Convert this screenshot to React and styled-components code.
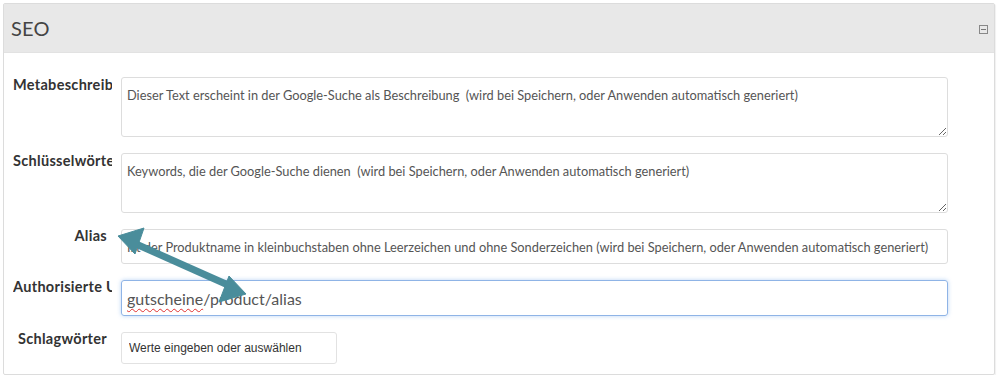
import React from "react"
import styled, { createGlobalStyle } from "styled-components"

const GlobalStyle = createGlobalStyle`
    body {
        margin: 0;
        background: #fff;
        font-family: Lato, "Open Sans", sans-serif;
    }
`

const Panel = styled.div`
    margin: 3px 5px 0 3px;
    border: 1px solid #dcdcdc;
    border-radius: 2px;
    height: 372px;
    box-sizing: border-box;
    box-shadow: 1px 1px 1px rgba(0,0,0,.06);
`

const Header = styled.div`
    display: flex;
    align-items: center;
    justify-content: space-between;
    height: 48px;
    padding: 0 6px 0 7px;
    background: #e8e8e8;
    border-bottom: 1px solid #e2e2e2;
`

const Title = styled.h3`
    margin: 0;
    font-size: 20px;
    font-weight: 400;
    color: #444;
    letter-spacing: .2px;
`

const CollapseIcon = styled.span`
    display: inline-block;
    width: 7px;
    height: 7px;
    border: 1px solid #888;
    position: relative;
    margin-top: 2px;
    &::after {
        content: "";
        position: absolute;
        left: 1px;
        right: 1px;
        top: 3px;
        height: 1px;
        background: #777;
    }
`

const Body = styled.div`
    position: relative;
    padding: 24px 0 0 9px;
    display: flex;
    flex-direction: column;
    gap: 16px;
`

const Row = styled.div`
    display: flex;
    align-items: flex-start;
    gap: 9px;
`

const Label = styled.label`
    width: 94px;
    padding-right: 5px;
    margin-top: ${p => (p.top || 0) - 2}px;
    flex: none;
    overflow: hidden;
    white-space: nowrap;
    text-align: right;
    font-size: 14.5px;
    font-weight: 700;
    letter-spacing: .3px;
    color: #333;
    line-height: 18px;
`

const TextArea = styled.textarea`
    width: 827px;
    height: 60px;
    box-sizing: border-box;
    border: 1px solid #ddd;
    border-radius: 3px;
    padding: 8px 5px;
    font-family: Lato, "Open Sans", sans-serif;
    font-size: 12.8px;
    color: #555;
    line-height: 18px;
    &::placeholder { color: #555; }
`

const Input = styled.input`
    width: 827px;
    height: 35px;
    box-sizing: border-box;
    border: 1px solid #ddd;
    border-radius: 3px;
    padding: 0 5px;
    font-family: Lato, "Open Sans", sans-serif;
    font-size: 12.8px;
    color: #555;
    &::placeholder { color: #555; }
`

const FocusField = styled.div`
    width: 827px;
    height: 36px;
    box-sizing: border-box;
    display: flex;
    align-items: center;
    border: 1px solid #8fb4e6;
    border-radius: 3px;
    padding: 0 5px;
    box-shadow: 0 0 4px rgba(102,160,230,.45);
    font-size: 16px;
    color: #555;
`

const Misspelled = styled.span`
    text-decoration: underline wavy #e03030;
    text-decoration-thickness: 1px;
    text-underline-offset: 3px;
`

const TagInput = styled.input`
    width: 216px;
    height: 32px;
    box-sizing: border-box;
    border: 1px solid #e2e2e2;
    border-radius: 3px;
    padding: 0 7px;
    font-family: "Liberation Sans", Arial, sans-serif;
    font-size: 12px;
    color: #333;
    &::placeholder { color: #333; }
`

const ArrowLayer = styled.svg`
    position: absolute;
    left: 0;
    top: 0;
    pointer-events: none;
`

const DoubleArrow = () => (
    <ArrowLayer width="300" height="330" viewBox="0 0 300 330">
        {/* page coords shifted into the body: panel left edge x=4, body top y=53 */}
        <g transform="translate(-4,-53)" fill="#4a8d9b" stroke="#4a8d9b">
            <line x1="136" y1="244" x2="228" y2="285" strokeWidth="7" />
            <polygon points="118,236 144,228 135,254" strokeWidth="1" strokeLinejoin="round" />
            <polygon points="246,294 219,302 229,276" strokeWidth="1" strokeLinejoin="round" />
        </g>
    </ArrowLayer>
)

const App = () => {
    return (
        <>
            <GlobalStyle />
            <Panel>
                <Header>
                    <Title>SEO</Title>
                    <CollapseIcon />
                </Header>
                <Body>
                    <Row>
                        <Label top={1}>Metabeschreibung</Label>
                        <TextArea placeholder="Dieser Text erscheint in der Google-Suche als Beschreibung  (wird bei Speichern, oder Anwenden automatisch generiert)" />
                    </Row>
                    <Row>
                        <Label top={1}>Schlüsselwörter</Label>
                        <TextArea placeholder="Keywords, die der Google-Suche dienen  (wird bei Speichern, oder Anwenden automatisch generiert)" />
                    </Row>
                    <Row>
                        <Label>Alias</Label>
                        <Input placeholder="Ist der Produktname in kleinbuchstaben ohne Leerzeichen und ohne Sonderzeichen (wird bei Speichern, oder Anwenden automatisch generiert)" />
                    </Row>
                    <Row>
                        <Label>Authorisierte URL</Label>
                        <FocusField role="textbox">
                            <Misspelled>gutscheine</Misspelled>/product/alias
                        </FocusField>
                    </Row>
                    <Row>
                        <Label>Schlagwörter</Label>
                        <TagInput placeholder="Werte eingeben oder auswählen" />
                    </Row>
                    <DoubleArrow />
                </Body>
            </Panel>
        </>
    )
}

export default App
